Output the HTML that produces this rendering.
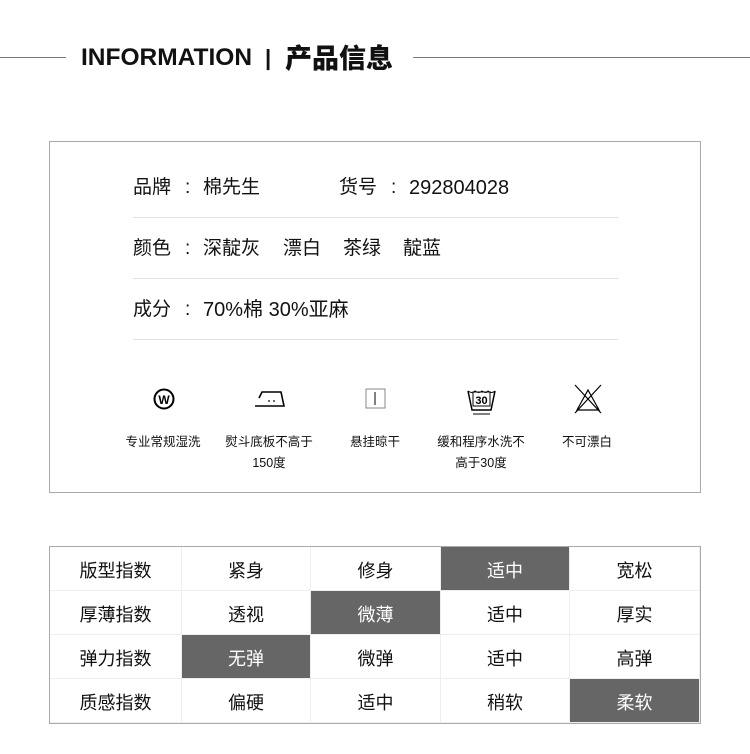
<!DOCTYPE html><html><head><meta charset="utf-8"><style>
body{margin:0;width:750px;height:754px;background:#fff;position:relative;font-family:"Liberation Sans","Noto Sans CJK SC",sans-serif;color:#111;overflow:hidden}
.a{position:absolute}
.t{position:absolute;font-size:19px;white-space:nowrap;line-height:24px}
.c{position:absolute;display:flex;align-items:center;justify-content:center;font-size:18px;border-right:1px solid #eee;border-bottom:1px solid #eee;box-sizing:border-box}
.d{background:#666;color:#fff}
.lbl{position:absolute;font-size:12.5px;text-align:center;line-height:21px;width:110px}
</style></head><body>
<div class="a" style="left:0;top:57px;width:66px;height:1px;background:#777"></div>
<div class="a" style="left:413px;top:57px;width:337px;height:1px;background:#777"></div>
<div class="a" style="left:81px;top:43px;font-size:24.5px;font-weight:bold;white-space:nowrap;line-height:30px">INFORMATION</div>
<div class="a" style="left:265px;top:43px;font-size:22px;font-weight:bold;line-height:30px">|</div>
<div class="a" style="left:285px;top:41px;font-size:27px;font-weight:900;white-space:nowrap;line-height:32px;font-family:'Noto Sans CJK SC',sans-serif">产品信息</div>

<div class="a" style="left:49px;top:141px;width:650px;height:350px;border:1px solid #aaa"></div>
<div class="t" style="left:133px;top:176px">品牌</div><div class="t" style="left:185px;top:176px">:</div><div class="t" style="left:203px;top:176px">棉先生</div>
<div class="t" style="left:339px;top:176px">货号</div><div class="t" style="left:391px;top:176px">:</div><div class="t" style="left:409px;top:176px;font-size:20px">292804028</div>
<div class="a" style="left:133px;top:217px;width:485px;height:1px;background:#e2e2e2"></div>
<div class="t" style="left:133px;top:237px">颜色</div><div class="t" style="left:185px;top:237px">:</div>
<div class="t" style="left:203px;top:237px">深靛灰</div><div class="t" style="left:283px;top:237px">漂白</div><div class="t" style="left:343px;top:237px">茶绿</div><div class="t" style="left:403px;top:237px">靛蓝</div>
<div class="a" style="left:133px;top:278px;width:485px;height:1px;background:#e2e2e2"></div>
<div class="t" style="left:133px;top:298px">成分</div><div class="t" style="left:185px;top:298px">:</div><div class="t" style="left:203px;top:298px;font-size:20px">70%棉 30%亚麻</div>
<div class="a" style="left:133px;top:339px;width:485px;height:1px;background:#e2e2e2"></div>

<svg class="a" style="left:0;top:380px" width="750" height="40" fill="none" stroke="#000">
<circle cx="164" cy="19" r="9.5" stroke-width="2"/>
<text x="164" y="24" font-size="12" font-weight="bold" text-anchor="middle" fill="#000" stroke="none" font-family="Liberation Sans">W</text>
<path d="M255 26 L284 26 L281 12 L262 12 L259 18" stroke-width="1.6"/>
<circle cx="269" cy="21" r="0.9" fill="#000" stroke="none"/><circle cx="274" cy="21" r="0.9" fill="#000" stroke="none"/>
<rect x="366" y="9" width="19" height="19" stroke="#888"/><line x1="375" y1="12" x2="375" y2="25" stroke-width="1"/>
<path d="M468 11 L472 30 L491 30 L495 11" stroke-width="1.5"/><path d="M468 11 q4 3 7 0 q4 3 7 0 q4 3 6 0 q4 3 7 0" stroke-width="1"/>
<rect x="473" y="12" width="17" height="14" stroke-width="1"/>
<text x="481.5" y="24" font-size="11" font-weight="bold" text-anchor="middle" fill="#000" stroke="none" font-family="Liberation Sans">30</text>
<line x1="473" y1="34" x2="490" y2="34"/>
<path d="M577 30 L588 10 L599 30 Z M575 5 L601 33 M601 5 L575 33" stroke-width="1.2"/>
</svg>
<div class="lbl" style="left:108px;top:432px">专业常规湿洗</div>
<div class="lbl" style="left:214px;top:432px">熨斗底板不高于<br>150度</div>
<div class="lbl" style="left:320px;top:432px">悬挂晾干</div>
<div class="lbl" style="left:426px;top:432px">缓和程序水洗不<br>高于30度</div>
<div class="lbl" style="left:532px;top:432px">不可漂白</div>

<div class="a" style="left:49px;top:546px;width:650px;height:176px;border:1px solid #aaa"></div>
<div id="tb"></div>
<script>
var R=[["版型指数","紧身","修身","适中","宽松",3],["厚薄指数","透视","微薄","适中","厚实",2],["弹力指数","无弹","微弹","适中","高弹",1],["质感指数","偏硬","适中","稍软","柔软",4]];
var X=[50,182,311,441,570,700],h="";
R.forEach(function(r,i){for(var j=0;j<5;j++){h+='<div class="c'+(r[5]==j?' d':'')+'" style="left:'+X[j]+'px;top:'+(547+i*44)+'px;width:'+(X[j+1]-X[j])+'px;height:44px;padding-top:2px">'+r[j]+'</div>';}});
document.getElementById('tb').innerHTML=h;
</script>
</body></html>
